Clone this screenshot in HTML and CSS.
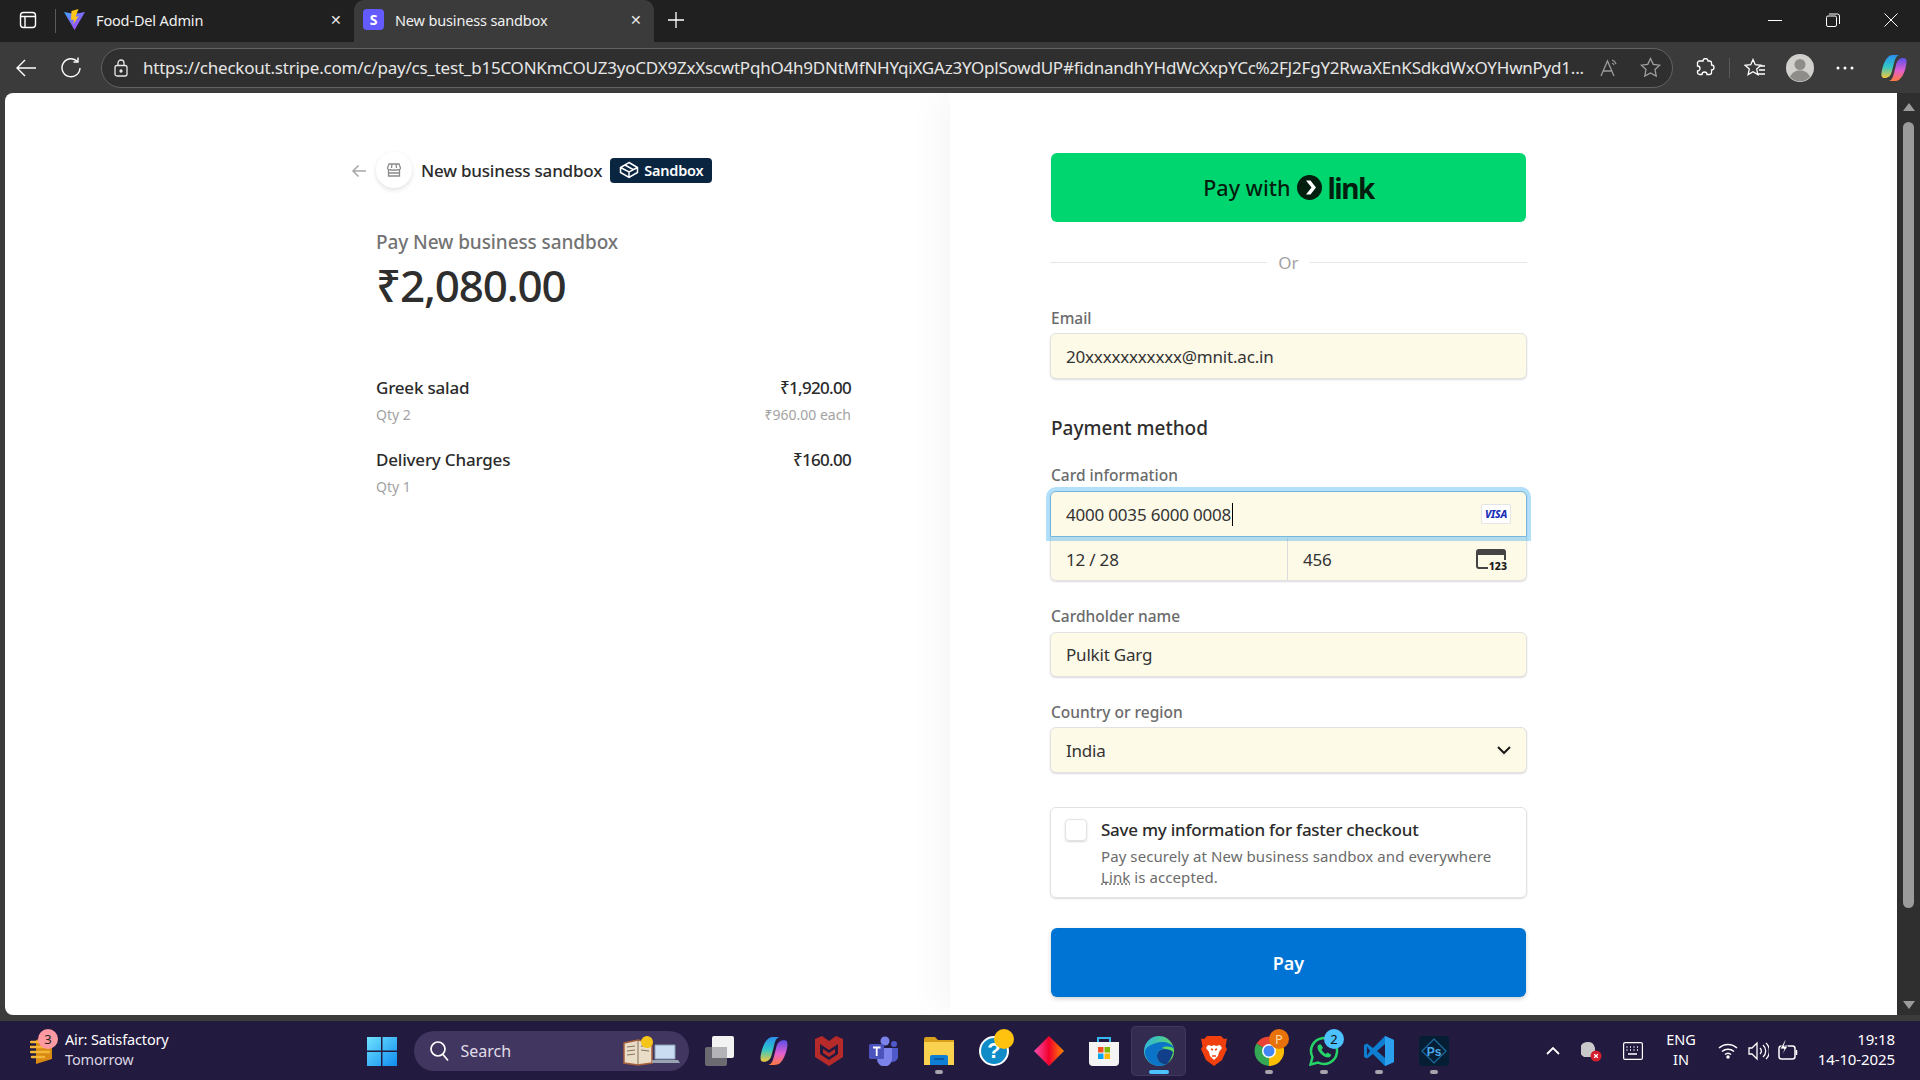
FILE: index.html
```html
<!DOCTYPE html>
<html lang="en">
<head>
    <meta charset="UTF-8">
    <meta name="viewport" content="width=device-width, initial-scale=1.0">
    <title>New business sandbox</title>
    <link rel="stylesheet" href="styles.css">
</head>
<body>
    <!-- tab strip -->
    <header class="tabstrip">
        <div class="sidebar_btn">
            <svg width="18" height="18" viewBox="0 0 18 18" fill="none" stroke="#fff" stroke-width="1.4"><rect x="1.5" y="1.5" width="15" height="15" rx="3"/><path d="M1.5 5.5h15M6 5.5v11"/></svg>
        </div>
        <div class="tab">
            <svg class="tab_icon" width="21" height="21" viewBox="0 0 21 21"><defs><linearGradient id="vite" x1="0" y1="0" x2="1" y2="1"><stop offset="0" stop-color="#41a5ff"/><stop offset="1" stop-color="#bd34fe"/></linearGradient></defs><path d="M0 3l10.5 2L21 3 10.5 21z" fill="url(#vite)"/><path d="M14.5 0L7.500 2l-.5 9 3-.6-.7 4.800 5.200-8-3 .5z" fill="#ffc517"/></svg>
            <span class="tab_title">Food-Del Admin</span>
            <span class="tab_close">✕</span>
        </div>
        <div class="tab tab_active">
            <span class="stripe_icon">S</span>
            <span class="tab_title">New business sandbox</span>
            <span class="tab_close">✕</span>
        </div>
        <div class="new_tab">
            <svg width="18" height="18" viewBox="0 0 18 18" stroke="#fff" stroke-width="1.3"><path d="M9 1v16M1 9h16"/></svg>
        </div>
        <div class="window_btns">
            <svg width="14" height="14" viewBox="0 0 14 14" stroke="#fff" stroke-width="1"><path d="M0 7.500h14"/></svg>
            <svg width="14" height="14" viewBox="0 0 14 14" fill="none" stroke="#fff" stroke-width="1"><rect x=".5" y="3" width="10" height="10.500" rx="1.500"/><path d="M3 1h8.500a2 2 0 0 1 2 2v8"/></svg>
            <svg width="14" height="14" viewBox="0 0 14 14" stroke="#fff" stroke-width="1"><path d="M.5.5l13 13M13.500.5l-13 13"/></svg>
        </div>
    </header>

    <!-- address bar row -->
    <div class="toolbar">
        <div class="nav_btn">
            <svg width="22" height="22" viewBox="0 0 22 22" fill="none" stroke="#fff" stroke-width="1.4"><path d="M21 11H2M10 3l-8 8 8 8"/></svg>
        </div>
        <div class="nav_btn">
            <svg width="22" height="22" viewBox="0 0 22 22" fill="none" stroke="#fff" stroke-width="1.4"><path d="M17.500 4.500A9 9 0 1 0 20 11"/><path d="M18 .5v4.500h-4.500"/></svg>
        </div>
        <div class="address">
            <svg class="lock_icon" width="14" height="18" viewBox="0 0 14 18" fill="none" stroke="#e8e8e8" stroke-width="1.300"><rect x="1" y="6.500" width="12" height="10.500" rx="2"/><path d="M4 6.500V4a3 3 0 0 1 6 0v2.500"/><circle cx="7" cy="12" r="1" fill="#e8e8e8"/></svg>
            <span class="url">https://checkout.stripe.com/c/pay/cs_test_b15CONKmCOUZ3yoCDX9ZxXscwtPqhO4h9DNtMfNHYqiXGAz3YOplSowdUP#fidnandhYHdWcXxpYCc%2FJ2FgY2RwaXEnKSdkdWxOYHwnPyd1...</span>
            <svg class="addr_icon" width="20" height="20" viewBox="0 0 20 20" fill="none" stroke="#9a9a9a" stroke-width="1.300"><path d="M1 18L7.500 3 14 18M3.500 13h8M12 2a6 6 0 0 1 4 4M12 5a3 3 0 0 1 2 2"/></svg>
            <svg class="addr_icon star_icon" width="21" height="21" viewBox="0 0 21 21" fill="none" stroke="#a0a0a0" stroke-width="1.300"><path d="M10.500 1.500l2.800 5.900 6.400.8-4.700 4.400 1.200 6.400-5.700-3.100-5.700 3.100 1.200-6.400L1.300 8.200l6.400-.8z"/></svg>
        </div>
        <div class="tool_icons">
            <svg class="ext_icon" width="20" height="20" viewBox="0 0 20 20" fill="none" stroke="#fff" stroke-width="1.300"><path d="M8 3a2.500 2.500 0 0 1 5 0h1.500a2 2 0 0 1 2 2v2a2.500 2.500 0 0 1 0 5v2.500a2 2 0 0 1-2 2H12a2.500 2.500 0 0 0-5 0H4.500a2 2 0 0 1-2-2V13a2.500 2.500 0 0 0 0-5V5a2 2 0 0 1 2-2z"/></svg>
            <span class="tool_sep"></span>
            <svg class="fav_icon" width="22" height="20" viewBox="0 0 22 20" fill="none" stroke="#fff" stroke-width="1.300"><path d="M9 1.500l2.300 5.200 5.600.6-4.200 3.800 1.200 5.500L9 13.800l-4.900 2.800 1.200-5.500L1.100 7.300l5.600-.6zM15 8h6M15 12h6M13 16h8"/></svg>
            <svg class="profile_icon" width="28" height="28" viewBox="0 0 28 28"><circle cx="14" cy="14" r="14" fill="#d2d0cc"/><circle cx="14" cy="10.500" r="5.500" fill="#8f8d8a"/><path d="M4 23c2-5 6-6.500 10-6.500S22 18 24 23a14 14 0 0 1-20 0z" fill="#8f8d8a"/></svg>
            <svg class="dots_icon" width="18" height="4" viewBox="0 0 18 4" fill="#fff"><circle cx="2" cy="2" r="1.500"/><circle cx="9" cy="2" r="1.500"/><circle cx="16" cy="2" r="1.500"/></svg>
            <svg class="copilot_icon" width="28" height="28" viewBox="0 0 28 28"><defs><linearGradient id="cp1" x1="0" y1="0" x2="0" y2="1"><stop offset="0" stop-color="#2a8ff0"/><stop offset=".5" stop-color="#2fc6c8"/><stop offset="1" stop-color="#f2c83a"/></linearGradient><linearGradient id="cp2" x1="0" y1="0" x2="0" y2="1"><stop offset="0" stop-color="#5a4fe8"/><stop offset=".55" stop-color="#e45fd0"/><stop offset="1" stop-color="#ff7a3c"/></linearGradient></defs><path d="M8 3c2-2 4-2 6-2h5c-3 1-4 4-5 8l-2 8c-1 5-4 7-7 7H4c-3 0-3-4-2-8 1-5 3-10 6-13z" fill="url(#cp1)"/><path d="M20 25c-2 2-4 2-6 2H9c3-1 4-4 5-8l2-8c1-5 4-7 7-7h1c3 0 3 4 2 8-1 5-3 10-6 13z" fill="url(#cp2)"/></svg>
        </div>
    </div>

    <!-- page area -->
    <div class="viewport">
        <main class="page">
            <section class="summary">
                <div class="merchant">
                    <svg class="back_arrow" width="16" height="14" viewBox="0 0 16 14" fill="none" stroke="#a8a8a8" stroke-width="1.600"><path d="M15 7H2M7.500 1.500L2 7l5.500 5.500"/></svg>
                    <span class="merchant_logo">
                        <svg width="16" height="16" viewBox="0 0 16 16" fill="none" stroke="#8a8a8a" stroke-width="1.300"><path d="M3 2h10l1.500 4a2 2 0 0 1-3.200 1.500 2.500 2.500 0 0 1-3.300 0 2.500 2.500 0 0 1-3.300 0A2 2 0 0 1 1.500 6zM2.500 8v6h11V8M3 11h10M6 2L5.500 6M10 2l.5 4"/></svg>
                    </span>
                    <span class="merchant_name">New business sandbox</span>
                    <span class="sandbox_badge">
                        <svg width="20" height="18" viewBox="0 0 20 18" fill="none" stroke="#fff" stroke-width="1.500"><path d="M10 1.500l8.500 5v5L10 16.500l-8.500-5v-5zM1.500 6.500L10 11l8.500-4.500M10 11v5.500M6 4l8 4.500"/></svg>
                        Sandbox
                    </span>
                </div>
                <p class="pay_label">Pay New business sandbox</p>
                <p class="amount">₹2,080.00</p>

                <div class="line_item first_item">
                    <span class="item_name">Greek salad</span>
                    <span class="item_price">₹1,920.00</span>
                </div>
                <div class="line_sub">
                    <span>Qty 2</span>
                    <span>₹960.00 each</span>
                </div>
                <div class="line_item next_item">
                    <span class="item_name">Delivery Charges</span>
                    <span class="item_price">₹160.00</span>
                </div>
                <div class="line_sub">
                    <span>Qty 1</span>
                </div>
            </section>

            <section class="checkout">
                <button class="link_btn">
                    <span class="link_pay">Pay with</span>
                    <svg width="25" height="25" viewBox="0 0 25 25"><circle cx="12.500" cy="12.500" r="12.500" fill="#011e0f"/><path d="M9 5.500h4.500L19 12.500l-5.500 7H9l5.500-7z" fill="#fff"/></svg>
                    <span class="link_word">link</span>
                </button>

                <div class="or_row"><span>Or</span></div>

                <label class="field_label email_label">Email</label>
                <div class="field field_main">20xxxxxxxxxxx@mnit.ac.in</div>

                <h2 class="method_title">Payment method</h2>

                <label class="field_label card_label">Card information</label>
                <div class="card_group">
                    <div class="card_number">
                        <span>4000 0035 6000 0008<i class="caret"></i></span>
                        <span class="visa">VISA</span>
                    </div>
                    <div class="card_row">
                        <div class="card_exp">12 / 28</div>
                        <div class="card_cvc">
                            <span>456</span>
                            <span class="cvc_icon"><b>123</b></span>
                        </div>
                    </div>
                </div>

                <label class="field_label holder_label">Cardholder name</label>
                <div class="field field_short">Pulkit Garg</div>

                <label class="field_label country_label">Country or region</label>
                <div class="field field_country">
                    <span>India</span>
                    <svg width="14" height="9" viewBox="0 0 14 9" fill="none" stroke="#1a1a1a" stroke-width="2"><path d="M1 1l6 6 6-6"/></svg>
                </div>

                <div class="save_box">
                    <span class="checkbox"></span>
                    <div>
                        <p class="save_title">Save my information for faster checkout</p>
                        <p class="save_text">Pay securely at New business sandbox and everywhere <span class="link_dotted">Link</span> is accepted.</p>
                    </div>
                </div>

                <button class="pay_btn">Pay</button>
            </section>
        </main>

        <div class="scrollbar">
            <span class="arrow_up"></span>
            <span class="thumb"></span>
            <span class="arrow_down"></span>
        </div>
    </div>

    <!-- windows taskbar -->
    <footer class="taskbar">
        <div class="weather">
            <span class="weather_icon">
                <svg width="24" height="32" viewBox="0 0 24 32"><path d="M6 7l16-5v24L6 31z" fill="#d98a12"/><path d="M1 9h14M0 14h20M1 19h18M2 24h12" stroke="#f3b63a" stroke-width="2.500" stroke-linecap="round"/></svg>
                <span class="weather_badge">3</span>
            </span>
            <div class="weather_text">
                <span class="weather_top">Air: Satisfactory</span>
                <span class="weather_sub">Tomorrow</span>
            </div>
        </div>

        <div class="task_btn">
            <svg width="30" height="30" viewBox="0 0 30 30"><defs><linearGradient id="win" x1="0" y1="0" x2="1" y2="1"><stop offset="0" stop-color="#6fe3ff"/><stop offset="1" stop-color="#0f8cf0"/></linearGradient></defs><path d="M0 1h14v13.500H0zM15.500 1H30v13.500H15.500zM0 16h14v14H0zM15.500 16H30v14H15.500z" fill="url(#win)"/></svg>
        </div>

        <div class="search_pill">
            <svg width="20" height="22" viewBox="0 0 20 22" fill="none" stroke="#fff" stroke-width="1.700"><circle cx="9" cy="9" r="7"/><path d="M14 14.500l5 6"/></svg>
            <span class="search_text">Search</span>
            <svg class="search_art" width="58" height="32" viewBox="0 0 58 32"><path d="M1 8l14-3 14 3v20l-14 2-14-2z" fill="#e9ddc8" stroke="#a9603c" stroke-width="1.500"/><path d="M15 5v25M4 12l8-1M4 16l8-1M4 20l8-1M18 11l8 1M18 15l8 1" stroke="#85705a"/><circle cx="24" cy="7" r="6" fill="#f5c518"/><path d="M32 10h20v14H32z" fill="#c9dcf2" stroke="#8a9cb3"/><path d="M29 25h26l2 3H29z" fill="#9aa3b0"/></svg>
        </div>

        <div class="task_btn">
            <svg width="30" height="30" viewBox="0 0 30 30"><rect x="1" y="11" width="22" height="19" rx="2" fill="#6a6a70"/><rect x="8" y="0" width="22" height="22" rx="2" fill="#f2f2f2"/><rect x="8" y="11" width="15" height="11" fill="#b4b4b8"/></svg>
        </div>
        <div class="task_btn">
            <svg width="30" height="30" viewBox="0 0 28 28"><path d="M8 3c2-2 4-2 6-2h5c-3 1-4 4-5 8l-2 8c-1 5-4 7-7 7H4c-3 0-3-4-2-8 1-5 3-10 6-13z" fill="url(#cp1)"/><path d="M20 25c-2 2-4 2-6 2H9c3-1 4-4 5-8l2-8c1-5 4-7 7-7h1c3 0 3 4 2 8-1 5-3 10-6 13z" fill="url(#cp2)"/></svg>
        </div>
        <div class="task_btn">
            <svg width="28" height="30" viewBox="0 0 28 30"><path d="M0 3l7-3 7 5 7-5 7 3v18l-14 9-14-9z" fill="#b62a2a"/><path d="M5 8l9 6 9-6v10l-9 6-9-6z" fill="#231a3f"/><path d="M8 13l6 4 6-4v4l-6 4-6-4z" fill="#b62a2a"/></svg>
        </div>
        <div class="task_btn">
            <svg width="30" height="30" viewBox="0 0 30 30"><circle cx="16" cy="5" r="4.500" fill="#7b83eb"/><circle cx="25" cy="8" r="3" fill="#5059c9"/><path d="M20 12h9v9a5 5 0 0 1-7 4.500z" fill="#5059c9"/><path d="M8 12h15v11a7 7 0 0 1-15 0z" fill="#7b83eb"/><rect x="0" y="8" width="15" height="15" rx="1.500" fill="#4b53bc"/><path d="M4 11.500h7.500M7.700 11.500V20" stroke="#fff" stroke-width="1.800"/></svg>
        </div>
        <div class="task_btn has_dot">
            <svg width="30" height="28" viewBox="0 0 30 28"><path d="M0 2a2 2 0 0 1 2-2h9l3 3h16v6H0z" fill="#d9a01c"/><path d="M0 5h30v23H0z" fill="#fbd24f"/><path d="M6 20a2 2 0 0 1 2-2h14a2 2 0 0 1 2 2v8H6z" fill="#0f7fd6"/><path d="M10 22h10" stroke="#0a4f8f" stroke-width="1.500"/></svg>
            <span class="run_dot"></span>
        </div>
        <div class="task_btn">
            <svg width="30" height="30" viewBox="0 0 30 30"><circle cx="15" cy="15" r="14" fill="#0f8bc8" stroke="#fff" stroke-width="2"/><text x="15" y="22" text-anchor="middle" class="help_mark">?</text></svg>
            <span class="help_dot"></span>
        </div>
        <div class="task_btn">
            <svg width="30" height="30" viewBox="0 0 30 30"><defs><linearGradient id="dia" x1="0" y1="0" x2="1" y2="0"><stop offset="0" stop-color="#f94fb0"/><stop offset=".5" stop-color="#f2002d"/><stop offset="1" stop-color="#ff8a00"/></linearGradient></defs><path d="M15 0l15 15-15 15L0 15z" fill="url(#dia)"/></svg>
        </div>
        <div class="task_btn">
            <svg width="30" height="30" viewBox="0 0 30 30"><path d="M9 6V2h12v4" fill="none" stroke="#35b8f0" stroke-width="2"/><path d="M0 6h30v20a4 4 0 0 1-4 4H4a4 4 0 0 1-4-4z" fill="#f4f4f4"/><rect x="9" y="11" width="5.500" height="5.500" fill="#f25022"/><rect x="15.500" y="11" width="5.500" height="5.500" fill="#7fba00"/><rect x="9" y="17.500" width="5.500" height="5.500" fill="#00a4ef"/><rect x="15.500" y="17.500" width="5.500" height="5.500" fill="#ffb900"/></svg>
        </div>
        <div class="task_btn task_current">
            <svg width="30" height="30" viewBox="0 0 30 30"><defs><linearGradient id="edge1" x1="0" y1="0" x2="1" y2=".4"><stop offset="0" stop-color="#2bb3e8"/><stop offset="1" stop-color="#5fd95e"/></linearGradient></defs><circle cx="15" cy="15" r="15" fill="url(#edge1)"/><path d="M1 16C1 24 8 30 15 30c3 0 6-1 8-2-6 1-10-3-10-8 0-4 3-7 8-7 5 0 9 1 9 1 0-1 0-2 0-2C27 6 18 5 12 7 5 9 1 12 1 16z" fill="#0c74c8"/><path d="M13 20c0-4 3-7 8-7 4 0 6 1 8 3-1 5-4 10-6 12-6 1-10-3-10-8z" fill="#123f8a"/><path d="M21 13c4 0 7 1 9 3 0-1 0-2 0-3-3-3-9-3-12-1z" fill="#5fd95e"/></svg>
            <span class="current_bar"></span>
        </div>
        <div class="task_btn">
            <svg width="26" height="30" viewBox="0 0 26 30"><path d="M6 0h14l3 3 3-.5-1.500 8L26 13 21 24l-8 6-8-6L0 13l1.500-2.500L0 2.500 3 3z" fill="#f1400e"/><path d="M7 9l4 1 2-1 2 1 4-1 2 3-3 4-1 4-4 4-4-4-1-4-3-4z" fill="#fff"/><path d="M10 13l2 1M16 13l-2 1M11 20h4" stroke="#f1400e" stroke-width="1.500"/></svg>
        </div>
        <div class="task_btn has_dot">
            <svg width="30" height="30" viewBox="0 0 30 30"><path d="M15 15L2.500 7.500A15 15 0 0 1 28 7.500z" fill="#ea4335"/><path d="M15 15l13-7.500A15 15 0 0 1 15 30z" fill="#fbbc04"/><path d="M15 15v15A15 15 0 0 1 2.500 7.500z" fill="#34a853"/><circle cx="15" cy="15" r="7" fill="#fff"/><circle cx="15" cy="15" r="5.500" fill="#4285f4"/></svg>
            <span class="icon_badge badge_orange">P</span>
            <span class="run_dot"></span>
        </div>
        <div class="task_btn has_dot">
            <svg width="30" height="30" viewBox="0 0 30 30" fill="none"><path d="M1.500 28.500l2-7.500a13 13 0 1 1 5.500 5.500z" stroke="#25d366" stroke-width="2.500"/><path d="M10 8.500c-2 1-2 4 0 7s6 6 9 6c2 0 3.500-1.500 3-3l-3.500-2-1.500 1.500c-2-1-3.500-2.500-4.500-4.500L14 12l-2-3.500z" fill="#25d366"/></svg>
            <span class="icon_badge badge_blue">2</span>
            <span class="run_dot"></span>
        </div>
        <div class="task_btn has_dot">
            <svg width="30" height="30" viewBox="0 0 30 30"><path d="M21 0l9 4v22l-9 4-12-12-6 4.500-3-1.500v-12l3-1.500 6 4.500z" fill="#0e7fd0"/><path d="M21 0l9 4v22l-9 4z" fill="#2aa0ee"/><path d="M21 8l-8 7 8 7z" fill="#231a3f"/><path d="M3 10.500l3 4.500-3 4.500z" fill="#231a3f"/></svg>
            <span class="run_dot"></span>
        </div>
        <div class="task_btn has_dot">
            <svg width="30" height="30" viewBox="0 0 30 30"><rect width="30" height="30" rx="4" fill="#061e33"/><path d="M15 3l12 12-12 12L3 15z" fill="none" stroke="#1c6ea8" stroke-width="1.200"/><text x="15" y="20" text-anchor="middle" class="ps_mark">Ps</text></svg>
            <span class="run_dot"></span>
        </div>

        <div class="tray">
            <div class="tray_item tray_caret">
                <svg width="14" height="8" viewBox="0 0 14 8" fill="none" stroke="#fff" stroke-width="1.800"><path d="M1 7l6-6 6 6"/></svg>
            </div>
            <div class="tray_item tray_cloud">
                <svg width="22" height="22" viewBox="0 0 22 22"><path d="M3 17a8 8 0 0 1 5-15c3 0 5 2 6 6v9z" fill="#c9c9c9"/><circle cx="15" cy="16" r="5.500" fill="#d3202e"/><path d="M13.200 14.200l3.600 3.600M16.800 14.200l-3.600 3.600" stroke="#fff" stroke-width="1.300"/></svg>
            </div>
            <div class="tray_item tray_kb">
                <svg width="20" height="18" viewBox="0 0 20 18" fill="none" stroke="#fff" stroke-width="1.200"><rect x=".6" y=".6" width="18.800" height="16.800" rx="1.500"/><path d="M3.500 5h1M7 5h1M10.500 5h1M14 5h1M3.500 8h1M7 8h1M10.500 8h1M14 8h1M5 12h9" stroke-width="1.500"/></svg>
            </div>
            <div class="tray_lang"><span>ENG</span><span>IN</span></div>
            <div class="tray_item tray_wifi">
                <svg width="20" height="17" viewBox="0 0 20 17" fill="none" stroke="#fff" stroke-width="1.500"><path d="M1 6a13 13 0 0 1 18 0M4 9.500a9 9 0 0 1 12 0M7 12.500a4.500 4.500 0 0 1 6 0"/><circle cx="10" cy="15" r="1" fill="#fff"/></svg>
            </div>
            <div class="tray_item tray_vol">
                <svg width="21" height="20" viewBox="0 0 21 20" fill="none" stroke="#fff" stroke-width="1.300"><path d="M1 7v6h3l5 5V2L4 7zM12 7a4 4 0 0 1 0 6M15 4a8 8 0 0 1 0 12M18 2a11 11 0 0 1 0 16"/></svg>
            </div>
            <div class="tray_item tray_batt">
                <svg width="22" height="22" viewBox="0 0 22 22" fill="none" stroke="#fff" stroke-width="1.500"><rect x="3" y="6" width="16" height="13" rx="2.500"/><path d="M20.500 10v5"/><path d="M9 0L4 9h4L6 15l6-9H8l2-6z" fill="#fff" stroke="#231a3f" stroke-width=".8"/></svg>
            </div>
            <div class="clock"><span>19:18</span><span>14-10-2025</span></div>
        </div>
    </footer>
</body>
</html>
```

FILE: styles.css
```css
* {
    margin: 0;
    padding: 0;
    box-sizing: border-box;
}
body {
    width: 1920px;
    height: 1080px;
    display: flex;
    flex-direction: column;
    overflow: hidden;
    font-family: "Noto Sans", "Open Sans", sans-serif;
    background-color: #3b3b3b;
}

/* tab strip */
.tabstrip {
    height: 42px;
    display: flex;
    align-items: stretch;
    background-color: #202020;
    color: #fff;
}
.sidebar_btn {
    width: 56px;
    padding-bottom: 2px;
    display: flex;
    align-items: center;
    justify-content: center;
    position: relative;
}
.sidebar_btn::after {
    content: "";
    position: absolute;
    right: 0;
    top: 9px;
    bottom: 9px;
    width: 1px;
    background-color: #5a5a5a;
}
.tab {
    width: 298px;
    display: flex;
    align-items: center;
    padding: 0 12px 3px 8px;
}
.tab_active {
    width: 300px;
    background-color: #3b3b3b;
    border-radius: 10px 10px 0 0;
    padding: 0 12px 3px 9px;
}
.tab_icon {
    flex: none;
}
.tab_title {
    flex: 1;
    margin-left: 11px;
    font-size: 14.500px;
    letter-spacing: -0.15px;
    white-space: nowrap;
    color: #f0f0f0;
}
.tab_close {
    font-size: 14px;
    color: #e8e8e8;
}
.stripe_icon {
    width: 21px;
    height: 21px;
    flex: none;
    border-radius: 4px;
    background-color: #635bff;
    color: #fff;
    font-size: 14px;
    font-weight: 700;
    text-align: center;
    line-height: 21px;
}
.new_tab {
    width: 44px;
    padding-bottom: 2px;
    display: flex;
    align-items: center;
    justify-content: center;
}
.window_btns {
    margin-left: auto;
    padding: 0 22px 2px 0;
    display: flex;
    align-items: center;
    gap: 44px;
}

/* toolbar */
.toolbar {
    height: 51px;
    display: flex;
    align-items: center;
    background-color: #3b3b3b;
    padding-left: 3px;
}
.nav_btn {
    width: 45px;
    display: flex;
    justify-content: center;
}
.address {
    width: 1572px;
    height: 40px;
    flex: none;
    margin-left: 8px;
    padding: 0 12px;
    display: flex;
    align-items: center;
    border: 1px solid #626262;
    border-radius: 20px;
    background-color: #2f2f2f;
}
.lock_icon {
    flex: none;
}
.url {
    width: 1439px;
    flex: none;
    margin-left: 15px;
    font-size: 17px;
    letter-spacing: -0.22px;
    white-space: nowrap;
    color: #e6e6e6;
}
.addr_icon {
    margin-left: 18px;
    flex: none;
}
.star_icon {
    margin-left: 20px;
}
.tool_icons {
    flex: 1;
    display: flex;
    align-items: center;
    padding-left: 22px;
}
.tool_sep {
    width: 1px;
    height: 20px;
    margin: 0 14px;
    background-color: #5a5a5a;
}
.profile_icon {
    margin-left: 20px;
}
.dots_icon {
    margin-left: 22px;
}
.copilot_icon {
    margin-left: 26px;
}

/* page */
.viewport {
    height: 922px;
    flex: none;
    display: flex;
    padding-left: 5px;
}
.page {
    width: 1892px;
    display: flex;
    background-color: #fff;
    border-radius: 8px 0 0 8px;
    overflow: hidden;
}
.summary {
    width: 945px;
    padding: 59px 0 0 371px;
    color: #1a1a1a;
}
.merchant {
    width: 475px;
    height: 36px;
    display: flex;
    align-items: center;
    position: relative;
}
.back_arrow {
    position: absolute;
    left: -25px;
    top: 12px;
}
.merchant_logo {
    width: 36px;
    height: 36px;
    display: flex;
    align-items: center;
    justify-content: center;
    border-radius: 50%;
    background-color: #fff;
    box-shadow: 0 2px 5px rgba(0, 0, 0, 0.12);
}
.merchant_name {
    margin-left: 9px;
    font-size: 17px;
    font-weight: 500;
    letter-spacing: -0.2px;
    color: #2b2b2b;
}
.sandbox_badge {
    height: 25px;
    margin-left: 8px;
    padding: 0 9px;
    display: flex;
    align-items: center;
    gap: 5px;
    border-radius: 4px;
    background-color: #0a2540;
    color: #fff;
    font-size: 14.500px;
    font-weight: 600;
    letter-spacing: -0.2px;
}
.pay_label {
    margin-top: 40px;
    line-height: 28px;
    font-size: 19px;
    font-weight: 500;
    letter-spacing: -0.1px;
    color: #737373;
}
.amount {
    margin-top: 1px;
    line-height: 56px;
    font-size: 44px;
    font-weight: 500;
    letter-spacing: -1.200px;
    color: #2e2e2e;
}
.line_item,
.line_sub {
    width: 475px;
    display: flex;
    justify-content: space-between;
}
.line_item {
    line-height: 24px;
    font-size: 17px;
    font-weight: 500;
    color: #2b2b2b;
    letter-spacing: -0.2px;
}
.item_price {
    letter-spacing: -0.7px;
}
.first_item {
    margin-top: 63px;
}
.next_item {
    margin-top: 23px;
}
.line_sub {
    margin-top: 5px;
    line-height: 20px;
    font-size: 14px;
    color: #a3a3a3;
}

/* checkout form */
.checkout {
    width: 947px;
    padding: 60px 0 0 100px;
    box-shadow: -15px 0 30px rgba(0, 0, 0, 0.03);
}
.checkout > * {
    width: 477px;
}
.link_btn {
    height: 69px;
    margin-left: 1px;
    width: 475px;
    display: flex;
    align-items: center;
    justify-content: center;
    border: none;
    border-radius: 6px;
    background-color: #00d66f;
    color: #011e0f;
    font-family: inherit;
}
.link_pay {
    margin-right: 7px;
    font-size: 21.500px;
    font-weight: 500;
}
.link_word {
    margin-left: 5px;
    font-size: 28px;
    font-weight: 700;
    letter-spacing: -1.500px;
    line-height: 1;
}
.or_row {
    height: 20px;
    margin-top: 30px;
    display: flex;
    align-items: center;
    gap: 11px;
    font-size: 17px;
    color: #a3a3a3;
}
.or_row::before,
.or_row::after {
    content: "";
    flex: 1;
    height: 1px;
    background-color: #e6e6e6;
}
.field_label {
    display: block;
    padding-left: 1px;
    line-height: 18px;
    font-size: 15.500px;
    font-weight: 500;
    color: #6b6b6b;
}
.email_label {
    margin-top: 37px;
}
.card_label {
    margin-top: 25px;
}
.holder_label {
    margin-top: 26px;
}
.country_label {
    margin-top: 26px;
}
.field {
    display: flex;
    align-items: center;
    justify-content: space-between;
    padding: 0 15px;
    border: 1px solid #e2e2e2;
    border-radius: 6px;
    background-color: #fefae8;
    box-shadow: 0 1px 2px rgba(0, 0, 0, 0.14);
    font-size: 17px;
    letter-spacing: -0.2px;
    color: #333;
}
.field_main {
    height: 46px;
    margin-top: 6px;
    padding-top: 1px;
}
.field_short {
    height: 45px;
    margin-top: 7px;
}
.field_country {
    height: 46px;
    margin-top: 6px;
}
.method_title {
    margin-top: 36px;
    padding-left: 1px;
    line-height: 26px;
    font-size: 19px;
    font-weight: 500;
    color: #2e2e2e;
}
.card_group {
    margin-top: 7px;
    border-radius: 6px;
    background-color: #fefae8;
    box-shadow: 0 1px 2px rgba(0, 0, 0, 0.14);
    font-size: 17px;
    letter-spacing: -0.2px;
    color: #333;
}
.card_number {
    height: 46px;
    position: relative;
    z-index: 1;
    display: flex;
    align-items: center;
    justify-content: space-between;
    padding: 0 15px;
    border: 1px solid #77b6dd;
    border-radius: 6px 6px 0 0;
    background-color: #fefae8;
    box-shadow: 0 0 0 4px rgba(1, 150, 237, 0.3);
}
.caret {
    display: inline-block;
    width: 1px;
    height: 23px;
    margin-left: 1px;
    vertical-align: -5px;
    background-color: #000;
}
.visa {
    width: 30px;
    height: 20px;
    border: 1px solid #e4e4e4;
    border-radius: 2px;
    background-color: #fff;
    color: #1a2fb8;
    font-size: 10.500px;
    font-weight: 800;
    font-style: italic;
    text-align: center;
    line-height: 18px;
    letter-spacing: -0.2px;
}
.card_row {
    height: 44px;
    padding-top: 1px;
    display: flex;
    border: 1px solid #e2e2e2;
    border-top: none;
    border-radius: 0 0 6px 6px;
}
.card_exp {
    width: 237px;
    padding-left: 15px;
    line-height: 43px;
    border-right: 1px solid #dcdcdc;
}
.card_cvc {
    flex: 1;
    display: flex;
    align-items: center;
    justify-content: space-between;
    padding: 0 20px 0 15px;
}
.cvc_icon {
    width: 30px;
    height: 20px;
    position: relative;
    border: 2px solid #444;
    border-top-width: 6px;
    border-radius: 3px;
}
.cvc_icon b {
    position: absolute;
    right: -3px;
    bottom: -5px;
    padding-left: 1px;
    background-color: #fefae8;
    font-size: 10.500px;
    font-weight: 800;
    letter-spacing: 0;
    line-height: 12px;
    color: #1a1a1a;
}
.save_box {
    height: 91px;
    margin-top: 34px;
    padding: 10px 14px 0;
    display: flex;
    gap: 14px;
    border: 1px solid #e2e2e2;
    border-radius: 6px;
    box-shadow: 0 1px 2px rgba(0, 0, 0, 0.14);
}
.checkbox {
    width: 22px;
    height: 22px;
    flex: none;
    margin-top: 1px;
    border: 1px solid #e2e2e2;
    border-radius: 4px;
    box-shadow: 0 1px 2px rgba(0, 0, 0, 0.16);
}
.save_title {
    line-height: 24px;
    font-size: 17px;
    font-weight: 500;
    letter-spacing: -0.25px;
    white-space: nowrap;
    color: #2b2b2b;
}
.save_text {
    margin-top: 4px;
    line-height: 21px;
    font-size: 15px;
    letter-spacing: 0.08px;
    color: #6b6b6b;
}
.link_dotted {
    text-decoration: underline dotted #6b6b6b;
}
.pay_btn {
    height: 69px;
    margin: 30px 0 0 1px;
    width: 475px;
    border: none;
    border-radius: 6px;
    background-color: #0074d4;
    color: #fff;
    font-family: inherit;
    font-size: 18px;
    font-weight: 600;
    box-shadow: 0 2px 4px rgba(0, 0, 0, 0.18);
}

/* scrollbar */
.scrollbar {
    flex: 1;
    display: flex;
    flex-direction: column;
    align-items: center;
    padding: 10px 0 6px;
    background-color: #2f2f2f;
}
.arrow_up,
.arrow_down {
    width: 0;
    height: 0;
    flex: none;
    border-left: 6px solid transparent;
    border-right: 6px solid transparent;
}
.arrow_up {
    border-bottom: 8px solid #9b9b9b;
}
.arrow_down {
    margin-top: auto;
    border-top: 8px solid #9b9b9b;
}
.thumb {
    width: 11px;
    height: 786px;
    margin-top: 11px;
    border-radius: 6px;
    background-color: #9b9b9b;
}

/* taskbar */
.taskbar {
    height: 59px;
    margin-top: 6px;
    display: flex;
    align-items: center;
    background-color: #231a3f;
    color: #fff;
}
.weather {
    width: 354px;
    padding: 0 0 3px 30px;
    display: flex;
    align-items: center;
}
.weather_icon {
    width: 35px;
    height: 32px;
    position: relative;
}
.weather_badge {
    width: 20px;
    height: 20px;
    position: absolute;
    left: 8px;
    top: -4px;
    border-radius: 50%;
    background-color: #ff9aa2;
    color: #222;
    font-size: 13px;
    text-align: center;
    line-height: 20px;
}
.weather_text {
    display: flex;
    flex-direction: column;
    font-size: 14.500px;
    line-height: 20px;
    letter-spacing: -0.15px;
}
.weather_sub {
    color: #d8d4e2;
}
.task_btn {
    width: 55px;
    height: 50px;
    flex: none;
    position: relative;
    display: flex;
    align-items: center;
    justify-content: center;
}
.search_pill {
    width: 275px;
    height: 40px;
    margin: 0 2.5px 0 4.5px;
    padding: 0 8px 0 15px;
    display: flex;
    align-items: center;
    border-radius: 20px;
    background-color: #40365f;
}
.search_text {
    margin-left: 12px;
    font-size: 16px;
    color: #e0dde8;
}
.search_art {
    margin-left: auto;
}
.task_current {
    border-radius: 5px;
    background-color: #332b50;
    box-shadow: inset 0 0 0 1px #3f3860;
}
.current_bar {
    width: 20px;
    height: 4px;
    position: absolute;
    bottom: 2px;
    left: 17.500px;
    border-radius: 2px;
    background-color: #4cc2ff;
}
.run_dot {
    width: 8px;
    height: 4px;
    position: absolute;
    bottom: 2px;
    left: 23.500px;
    border-radius: 2px;
    background-color: #a6a3ad;
}
.help_mark {
    font-family: "Liberation Sans", sans-serif;
    font-size: 22px;
    font-weight: 700;
    fill: #fff;
}
.ps_mark {
    font-family: "Liberation Sans", sans-serif;
    font-size: 12px;
    font-weight: 700;
    fill: #4aa8ea;
}
.help_dot {
    width: 20px;
    height: 20px;
    position: absolute;
    right: 7px;
    top: 3px;
    border-radius: 50%;
    background-color: #ffc20e;
}
.icon_badge {
    width: 20px;
    height: 20px;
    position: absolute;
    right: 7px;
    top: 3px;
    border-radius: 50%;
    font-size: 13px;
    text-align: center;
    line-height: 20px;
}
.badge_orange {
    background-color: #e8710a;
    color: #ffd9a8;
}
.badge_blue {
    background-color: #4cc2ff;
    color: #111;
}

/* tray */
.tray {
    margin-left: auto;
    padding-right: 25px;
    display: flex;
    align-items: center;
}
.tray_item {
    display: flex;
    justify-content: center;
}
.tray_caret {
    width: 38px;
}
.tray_cloud {
    width: 40px;
}
.tray_kb {
    width: 42px;
}
.tray_lang {
    width: 54px;
    margin-right: 4px;
    padding-bottom: 3px;
    display: flex;
    flex-direction: column;
    align-items: center;
    font-size: 14.500px;
    line-height: 20px;
}
.tray_wifi {
    width: 32px;
}
.tray_vol {
    width: 28px;
}
.tray_batt {
    width: 30px;
}
.clock {
    width: 93px;
    padding-bottom: 3px;
    display: flex;
    flex-direction: column;
    align-items: flex-end;
    font-size: 15px;
    line-height: 20px;
    letter-spacing: -0.1px;
}
```
